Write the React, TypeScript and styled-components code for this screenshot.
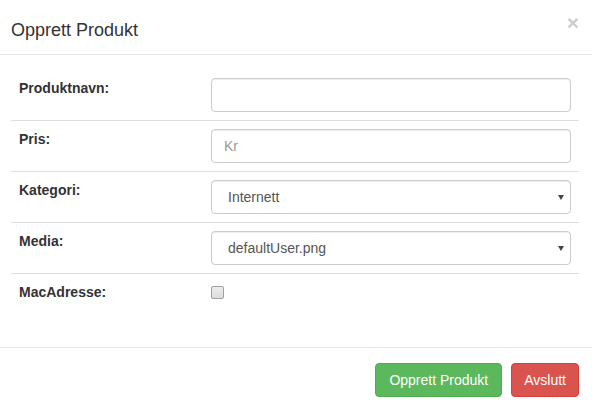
import React from "react";
import styled, { createGlobalStyle } from "styled-components";

const GlobalStyle = createGlobalStyle`
  html, body {
    margin: 0;
    padding: 0;
    background: #fff;
  }
  body {
    font-family: "Liberation Sans", Arial, sans-serif;
    font-size: 14px;
    line-height: 20px;
    color: #333;
  }
  * {
    box-sizing: border-box;
  }
`;

const Modal = styled.div`
  width: 592px;
  background: #fff;
`;

const Header = styled.div`
  display: flex;
  justify-content: space-between;
  align-items: flex-start;
  padding: 17px 13px 11px 11px;
  border-bottom: 1px solid #e5e5e5;
`;

const Title = styled.h4`
  margin: 0;
  font-size: 18px;
  line-height: 26px;
  font-weight: 500;
  color: #333;
`;

const Close = styled.button`
  margin-top: -5px;
  padding: 0;
  border: 0;
  background: none;
  font-family: "Liberation Sans", Arial, sans-serif;
  font-size: 21px;
  font-weight: bold;
  line-height: 1;
  color: #000;
  opacity: 0.2;
  cursor: pointer;
`;

const Body = styled.div`
  padding: 15px 13px 37px 11px;
`;

const Row = styled.div<{ $first?: boolean }>`
  display: grid;
  grid-template-columns: 192px 1fr;
  border-top: ${(p) => (p.$first ? "none" : "1px solid #ddd")};
`;

const LabelCell = styled.label`
  padding: 8px;
  font-weight: bold;
  line-height: 20px;
  color: #333;
`;

const FieldCell = styled.div`
  padding: 8px;
`;

const Input = styled.input`
  display: block;
  width: 100%;
  height: 34px;
  padding: 6px 12px;
  font-family: "Liberation Sans", Arial, sans-serif;
  font-size: 14px;
  line-height: 20px;
  color: #555;
  background: #fff;
  border: 1px solid #ccc;
  border-radius: 4px;
  box-shadow: inset 0 1px 1px rgba(0, 0, 0, 0.075);
  outline: none;

  &::placeholder {
    color: #999;
  }
`;

const SelectWrap = styled.div`
  position: relative;
`;

const Select = styled.select`
  display: block;
  width: 100%;
  height: 34px;
  padding: 6px 24px 6px 16px;
  font-family: "Liberation Sans", Arial, sans-serif;
  font-size: 14px;
  line-height: 20px;
  color: #555;
  background: #fff;
  border: 1px solid #ccc;
  border-radius: 4px;
  box-shadow: inset 0 1px 1px rgba(0, 0, 0, 0.075);
  appearance: none;
  outline: none;
`;

const Arrow = styled.span`
  position: absolute;
  right: 7px;
  top: 15px;
  width: 0;
  height: 0;
  border-left: 3.5px solid transparent;
  border-right: 3.5px solid transparent;
  border-top: 5px solid #444;
  pointer-events: none;
`;

const Checkbox = styled.input`
  display: block;
  appearance: none;
  width: 13px;
  height: 13px;
  margin: 4px 0 0;
  border: 1px solid #a0a0a0;
  border-radius: 2px;
  background: linear-gradient(#ececec, #dcdcdc);
`;

const Footer = styled.div`
  display: flex;
  justify-content: flex-end;
  gap: 9px;
  padding: 15px 13px 15px;
  border-top: 1px solid #e5e5e5;
`;

const Button = styled.button<{ $variant: "success" | "danger" }>`
  height: 34px;
  padding: 6px ${(p) => (p.$variant === "success" ? "13px" : "12px")};
  font-family: "Liberation Sans", Arial, sans-serif;
  font-size: 14px;
  line-height: 20px;
  color: #fff;
  border-radius: 4px;
  border: 1px solid
    ${(p) => (p.$variant === "success" ? "#4cae4c" : "#d43f3a")};
  background: ${(p) => (p.$variant === "success" ? "#5cb85c" : "#d9534f")};
  cursor: pointer;
`;

const App: React.FC = () => {
  return (
    <>
      <GlobalStyle />
      <Modal>
        <Header>
          <Title>Opprett Produkt</Title>
          <Close type="button">×</Close>
        </Header>
        <Body>
          <Row $first>
            <LabelCell>Produktnavn:</LabelCell>
            <FieldCell>
              <Input type="text" />
            </FieldCell>
          </Row>
          <Row>
            <LabelCell>Pris:</LabelCell>
            <FieldCell>
              <Input type="text" placeholder="Kr" />
            </FieldCell>
          </Row>
          <Row>
            <LabelCell>Kategori:</LabelCell>
            <FieldCell>
              <SelectWrap>
                <Select defaultValue="Internett">
                  <option>Internett</option>
                </Select>
                <Arrow />
              </SelectWrap>
            </FieldCell>
          </Row>
          <Row>
            <LabelCell>Media:</LabelCell>
            <FieldCell>
              <SelectWrap>
                <Select defaultValue="defaultUser.png">
                  <option>defaultUser.png</option>
                </Select>
                <Arrow />
              </SelectWrap>
            </FieldCell>
          </Row>
          <Row>
            <LabelCell>MacAdresse:</LabelCell>
            <FieldCell>
              <Checkbox type="checkbox" />
            </FieldCell>
          </Row>
        </Body>
        <Footer>
          <Button $variant="success">Opprett Produkt</Button>
          <Button $variant="danger">Avslutt</Button>
        </Footer>
      </Modal>
    </>
  );
};

export default App;
